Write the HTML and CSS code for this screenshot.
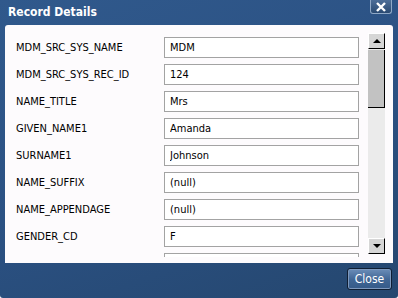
FILE: index.html
```
<!DOCTYPE html>
<html lang="en">
<head>
    <meta charset="UTF-8">
    <title>Record Details</title>
    <link rel="stylesheet" href="styles.css">
</head>
<body>
    <div class="dialog">
        <header class="titlebar">
            <h1>Record Details</h1>
            <button class="close-x" title="Close">
                <svg width="12" height="10" viewBox="0 0 12 10"><path d="M2 1 L10 9 M10 1 L2 9" stroke="#fff" stroke-width="2.4"/></svg>
            </button>
        </header>

        <div class="panel">
            <div class="fields">
                <div class="row"><label>MDM_SRC_SYS_NAME</label><input type="text" value="MDM"></div>
                <div class="row"><label>MDM_SRC_SYS_REC_ID</label><input type="text" value="124"></div>
                <div class="row"><label>NAME_TITLE</label><input type="text" value="Mrs"></div>
                <div class="row"><label>GIVEN_NAME1</label><input type="text" value="Amanda"></div>
                <div class="row"><label>SURNAME1</label><input type="text" value="Johnson"></div>
                <div class="row"><label>NAME_SUFFIX</label><input type="text" value="(null)"></div>
                <div class="row"><label>NAME_APPENDAGE</label><input type="text" value="(null)"></div>
                <div class="row"><label>GENDER_CD</label><input type="text" value="F"></div>
                <!-- next row only peeks in below the fold -->
                <div class="row"><label></label><input type="text" value=""></div>
            </div>
            <div class="scrollbar">
                <div class="sb-btn"><span class="arrow-up"></span></div>
                <div class="sb-thumb"></div>
                <div class="sb-track"></div>
                <div class="sb-btn"><span class="arrow-down"></span></div>
            </div>
        </div>

        <footer class="footer">
            <button class="btn-close">Close</button>
        </footer>
    </div>
</body>
</html>
```

FILE: styles.css
```
* {
    box-sizing: border-box;
    margin: 0;
    padding: 0;
}

body {
    width: 398px;
    height: 298px;
    overflow: hidden;
    font-family: Tahoma, "DejaVu Sans Condensed", "Liberation Sans", sans-serif;
    font-size: 11px;
}

.dialog {
    height: 298px;
    display: flex;
    flex-direction: column;
    background: linear-gradient(160deg, #30598c 0%, #2b5183 50%, #25476f 100%);
    border-radius: 0 0 3px 3px;
}

.titlebar {
    height: 25px;
    display: flex;
    justify-content: space-between;
    align-items: flex-start;
    padding: 0 6px 0 8px;
}

.titlebar h1 {
    color: #fff;
    font-size: 12px;
    font-weight: bold;
    line-height: 24px;
}

.close-x {
    width: 22px;
    height: 14px;
    display: flex;
    align-items: center;
    justify-content: center;
    border: 1px solid #8fa8c6;
    border-top: none;
    border-radius: 0 0 3px 3px;
    background: linear-gradient(#4d6e98, #2a4a72);
}

.panel {
    height: 238px;
    margin: 0 5px;
    padding: 8px 8px 6px 11px;
    background: #fdfbfd;
    border-radius: 3px 3px 0 0;
    display: flex;
    gap: 5px;
}

.fields {
    flex: 1;
    overflow: hidden;
    padding-top: 4px;
    display: flex;
    flex-direction: column;
    gap: 6px;
}

.row {
    display: flex;
    align-items: center;
    height: 21px;
    flex-shrink: 0;
}

.row label {
    width: 148px;
    color: #000;
}

.row input {
    width: 195px;
    height: 21px;
    border: 1px solid #a3a3a3;
    padding: 0 5px;
    font: inherit;
    color: #000;
    background: #fff;
    outline: none;
}

.scrollbar {
    width: 17px;
    height: 221px;
    display: flex;
    flex-direction: column;
    background: #ebebeb;
}

.sb-btn {
    height: 16px;
    display: flex;
    align-items: center;
    justify-content: center;
    background: #d6d6d6;
    border: 1px solid #fff;
    border-right-color: #000;
    border-bottom-color: #000;
}

.arrow-up {
    border: 4px solid transparent;
    border-bottom: 4px solid #000;
    border-top-width: 0;
}

.arrow-down {
    border: 4px solid transparent;
    border-top: 4px solid #000;
    border-bottom-width: 0;
}

.sb-thumb {
    height: 58px;
    margin-top: 1px;
    background: #c2c2c2;
    border-right: 1px solid #000;
    border-bottom: 1px solid #000;
}

.sb-track {
    flex: 1;
}

.footer {
    flex: 1;
    display: flex;
    justify-content: flex-end;
    align-items: flex-start;
    padding: 5px 6px 0 0;
}

.btn-close {
    width: 45px;
    height: 22px;
    color: #fff;
    font: inherit;
    font-size: 12px;
    border: 1px solid #0f1e33;
    border-radius: 3px;
    background: linear-gradient(#6b8db8, #3f6594 55%, #355a88);
    box-shadow: inset 0 0 0 1px #7d98bd;
}
```
